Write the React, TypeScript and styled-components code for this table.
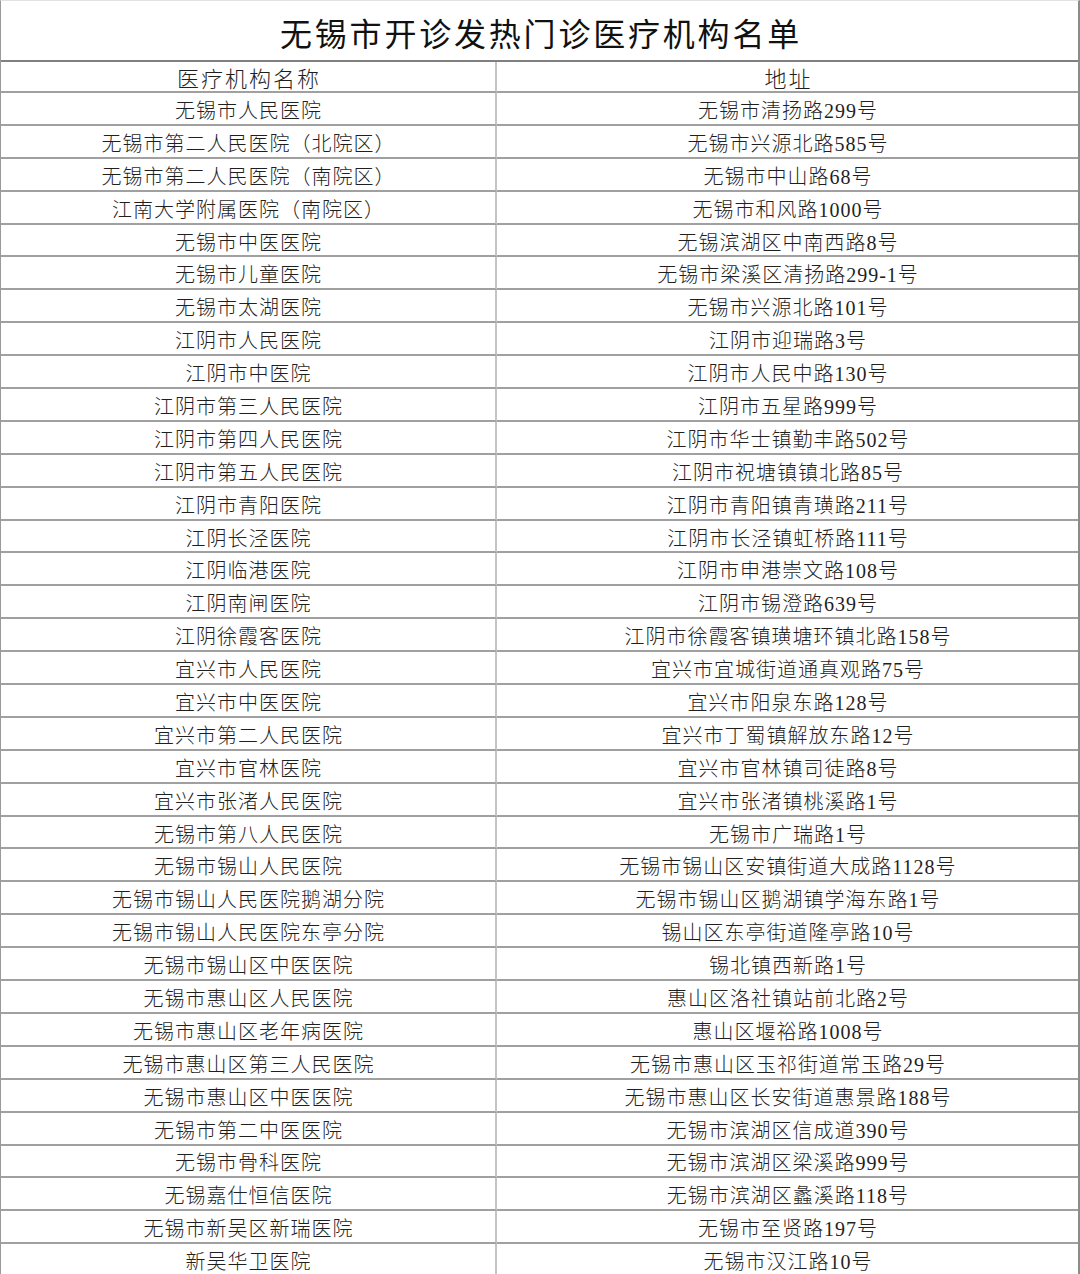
import React from "react";
import styled, {createGlobalStyle} from "styled-components";

const GlobalStyle = createGlobalStyle`
  html, body {
    margin: 0;
    padding: 0;
    background: #fff;
  }
  body {
    font-family: "Liberation Serif", "Noto Sans CJK SC", serif;
    color: #1f1f1f;
  }
`;

const rows: [string, string][] = [
  ["无锡市人民医院", "无锡市清扬路299号"],
  ["无锡市第二人民医院（北院区）", "无锡市兴源北路585号"],
  ["无锡市第二人民医院（南院区）", "无锡市中山路68号"],
  ["江南大学附属医院（南院区）", "无锡市和风路1000号"],
  ["无锡市中医医院", "无锡滨湖区中南西路8号"],
  ["无锡市儿童医院", "无锡市梁溪区清扬路299-1号"],
  ["无锡市太湖医院", "无锡市兴源北路101号"],
  ["江阴市人民医院", "江阴市迎瑞路3号"],
  ["江阴市中医院", "江阴市人民中路130号"],
  ["江阴市第三人民医院", "江阴市五星路999号"],
  ["江阴市第四人民医院", "江阴市华士镇勤丰路502号"],
  ["江阴市第五人民医院", "江阴市祝塘镇镇北路85号"],
  ["江阴市青阳医院", "江阴市青阳镇青璜路211号"],
  ["江阴长泾医院", "江阴市长泾镇虹桥路111号"],
  ["江阴临港医院", "江阴市申港崇文路108号"],
  ["江阴南闸医院", "江阴市锡澄路639号"],
  ["江阴徐霞客医院", "江阴市徐霞客镇璜塘环镇北路158号"],
  ["宜兴市人民医院", "宜兴市宜城街道通真观路75号"],
  ["宜兴市中医医院", "宜兴市阳泉东路128号"],
  ["宜兴市第二人民医院", "宜兴市丁蜀镇解放东路12号"],
  ["宜兴市官林医院", "宜兴市官林镇司徒路8号"],
  ["宜兴市张渚人民医院", "宜兴市张渚镇桃溪路1号"],
  ["无锡市第八人民医院", "无锡市广瑞路1号"],
  ["无锡市锡山人民医院", "无锡市锡山区安镇街道大成路1128号"],
  ["无锡市锡山人民医院鹅湖分院", "无锡市锡山区鹅湖镇学海东路1号"],
  ["无锡市锡山人民医院东亭分院", "锡山区东亭街道隆亭路10号"],
  ["无锡市锡山区中医医院", "锡北镇西新路1号"],
  ["无锡市惠山区人民医院", "惠山区洛社镇站前北路2号"],
  ["无锡市惠山区老年病医院", "惠山区堰裕路1008号"],
  ["无锡市惠山区第三人民医院", "无锡市惠山区玉祁街道常玉路29号"],
  ["无锡市惠山区中医医院", "无锡市惠山区长安街道惠景路188号"],
  ["无锡市第二中医医院", "无锡市滨湖区信成道390号"],
  ["无锡市骨科医院", "无锡市滨湖区梁溪路999号"],
  ["无锡嘉仕恒信医院", "无锡市滨湖区蠡溪路118号"],
  ["无锡市新吴区新瑞医院", "无锡市至贤路197号"],
  ["新吴华卫医院", "无锡市汉江路10号"],
];

const Sheet = styled.div`
  width: 1080px;
  box-sizing: border-box;
  border-left: 1px solid #9a9a9a;
  border-right: 2px solid #8c8c8c;
  border-top: 1px solid #e2e2e2;
`;

const Title = styled.h1`
  margin: 0;
  height: 61px;
  box-sizing: border-box;
  display: flex;
  align-items: center;
  justify-content: center;
  padding: 2px 0 0 3px;
  font-size: 32px;
  font-weight: 400;
  letter-spacing: 2.8px;
  color: #111;
  border-bottom: 2px solid #808080;
`;

const Table = styled.div`
  display: grid;
  grid-template-columns: 496px 1fr;
  grid-template-rows: 31px;
  grid-auto-rows: 32.9px;
`;

const Cell = styled.div<{$head?: boolean; $first?: boolean}>`
  box-sizing: border-box;
  display: flex;
  align-items: center;
  justify-content: center;
  white-space: nowrap;
  padding-top: ${p => (p.$head ? "0" : "2px")};
  padding-left: ${p => (p.$head ? "2px" : "1px")};
  font-size: ${p => (p.$head ? "22px" : "20px")};
  letter-spacing: ${p => (p.$head ? "2px" : "1px")};
  font-weight: 300;
  border-bottom: 2px solid #a0a0a0;
  border-right: ${p => (p.$first ? "2px solid #c4c4c4" : "none")};
`;

export default function App() {
  return (
    <>
      <GlobalStyle />
      <Sheet>
        <Title>无锡市开诊发热门诊医疗机构名单</Title>
        <Table>
          <Cell $head $first>医疗机构名称</Cell>
          <Cell $head>地址</Cell>
          {rows.map(([name, addr]) => (
            <React.Fragment key={name}>
              <Cell $first>{name}</Cell>
              <Cell>{addr}</Cell>
            </React.Fragment>
          ))}
        </Table>
      </Sheet>
    </>
  );
}
